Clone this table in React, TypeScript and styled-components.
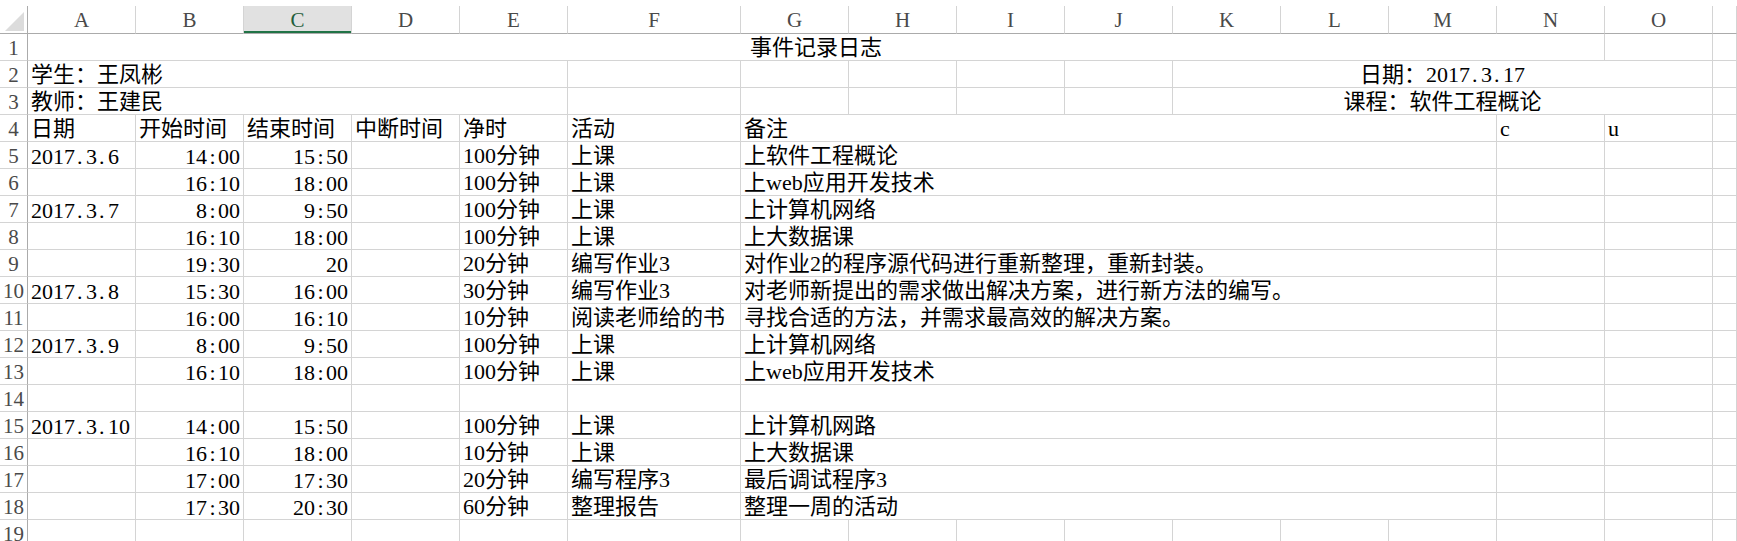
import React from "react";
import styled, { createGlobalStyle } from "styled-components";

const GRID = "#d4d4d4";
const HEAD_LINE = "#ababab";
const FONT = `"Liberation Serif", "Noto Sans CJK SC", serif`;

const GlobalStyle = createGlobalStyle`
  html, body {
    margin: 0;
    padding: 0;
    background: #ffffff;
    overflow: hidden;
  }
  body {
    font-family: ${FONT};
  }
`;

const Sheet = styled.div`
  display: grid;
  grid-template-columns: 28px repeat(5, 108px) 173px repeat(9, 108px) minmax(0, 1fr);
  grid-template-rows: 34px;
  grid-auto-rows: 27px;
  width: 1737px;
  height: 541px;
  overflow: hidden;
  color: #000000;
  font-family: ${FONT};
  font-size: 22px;
`;

const Corner = styled.div`
  margin-top: 6px;
  border-right: 1px solid ${HEAD_LINE};
  border-bottom: 1px solid ${HEAD_LINE};
  display: flex;
  justify-content: flex-end;
  align-items: flex-end;
  padding: 0 3px 2px 0;
`;

const CornerMark = styled.span`
  width: 19px;
  height: 19px;
  background: #dcdcdc;
  clip-path: polygon(100% 0, 100% 100%, 0 100%);
`;

const ColHead = styled.div<{ $selected?: boolean }>`
  margin-top: 6px;
  border-right: 1px solid ${GRID};
  border-bottom: 1px solid ${HEAD_LINE};
  display: flex;
  justify-content: center;
  align-items: flex-end;
  padding-bottom: 2px;
  font-size: 21px;
  line-height: 22px;
  color: ${(p) => (p.$selected ? "#1f5e3b" : "#4a4a4a")};
  background: ${(p) => (p.$selected ? "#e1e1e1" : "#ffffff")};
  box-shadow: ${(p) => (p.$selected ? "inset 0 -2px 0 #217346" : "none")};
`;

const RowHead = styled.div`
  border-right: 1px solid ${HEAD_LINE};
  border-bottom: 1px solid ${GRID};
  display: flex;
  justify-content: center;
  align-items: flex-end;
  padding-bottom: 1px;
  font-size: 21px;
  line-height: 22px;
  color: #4a4a4a;
  white-space: nowrap;
`;

type Align = "left" | "right" | "center";

const Cell = styled.div<{ $span?: number; $align?: Align }>`
  grid-column: span ${(p) => p.$span ?? 1};
  border-right: 1px solid ${GRID};
  border-bottom: 1px solid ${GRID};
  display: flex;
  align-items: flex-end;
  justify-content: ${(p) =>
    p.$align === "right" ? "flex-end" : p.$align === "center" ? "center" : "flex-start"};
  padding: 0 3px 1px 3px;
  line-height: 22px;
  white-space: nowrap;
  min-width: 0;
`;

/* numbers sit on a slightly lower baseline than the ideographs */
const NumText = styled.span`
  margin-bottom: -1px;
`;

/* half-width punctuation, as in the sheet's monospaced Latin glyphs */
const Punct = styled.span<{ $dot?: boolean }>`
  display: inline-block;
  width: 11px;
  text-align: ${(p) => (p.$dot ? "left" : "center")};
  padding-left: ${(p) => (p.$dot ? "2px" : "0")};
  box-sizing: border-box;
`;

function Num({ value }: { value?: string }) {
  if (!value) return null;
  const parts = value.split(/([.:])/);
  return (
    <NumText>
      {parts.map((part, i) =>
        part === "." || part === ":" ? (
          <Punct key={i} $dot={part === "."}>
            {part}
          </Punct>
        ) : (
          <React.Fragment key={i}>{part}</React.Fragment>
        )
      )}
    </NumText>
  );
}

const COLS = ["A", "B", "C", "D", "E", "F", "G", "H", "I", "J", "K", "L", "M", "N", "O", ""];

type Entry = {
  date?: string;
  start?: string;
  end?: string;
  net?: string;
  act?: string;
  note?: string;
};

const entries: Entry[] = [
  { date: "2017.3.6", start: "14:00", end: "15:50", net: "100分钟", act: "上课", note: "上软件工程概论" },
  { start: "16:10", end: "18:00", net: "100分钟", act: "上课", note: "上web应用开发技术" },
  { date: "2017.3.7", start: "8:00", end: "9:50", net: "100分钟", act: "上课", note: "上计算机网络" },
  { start: "16:10", end: "18:00", net: "100分钟", act: "上课", note: "上大数据课" },
  { start: "19:30", end: "20", net: "20分钟", act: "编写作业3", note: "对作业2的程序源代码进行重新整理，重新封装。" },
  { date: "2017.3.8", start: "15:30", end: "16:00", net: "30分钟", act: "编写作业3", note: "对老师新提出的需求做出解决方案，进行新方法的编写。" },
  { start: "16:00", end: "16:10", net: "10分钟", act: "阅读老师给的书", note: "寻找合适的方法，并需求最高效的解决方案。" },
  { date: "2017.3.9", start: "8:00", end: "9:50", net: "100分钟", act: "上课", note: "上计算机网络" },
  { start: "16:10", end: "18:00", net: "100分钟", act: "上课", note: "上web应用开发技术" },
  {},
  { date: "2017.3.10", start: "14:00", end: "15:50", net: "100分钟", act: "上课", note: "上计算机网路" },
  { start: "16:10", end: "18:00", net: "10分钟", act: "上课", note: "上大数据课" },
  { start: "17:00", end: "17:30", net: "20分钟", act: "编写程序3", note: "最后调试程序3" },
  { start: "17:30", end: "20:30", net: "60分钟", act: "整理报告", note: "整理一周的活动" },
];

function EntryRow({ n, e }: { n: number; e: Entry }) {
  return (
    <>
      <RowHead>{n}</RowHead>
      <Cell>
        <Num value={e.date} />
      </Cell>
      <Cell $align="right">
        <Num value={e.start} />
      </Cell>
      <Cell $align="right">
        <Num value={e.end} />
      </Cell>
      <Cell />
      <Cell>{e.net}</Cell>
      <Cell>{e.act}</Cell>
      <Cell $span={7}>{e.note}</Cell>
      <Cell />
      <Cell />
      <Cell />
    </>
  );
}

export default function App() {
  return (
    <>
      <GlobalStyle />
      <Sheet>
        <Corner>
          <CornerMark />
        </Corner>
        {COLS.map((c, i) => (
          <ColHead key={i} $selected={c === "C"}>
            {c}
          </ColHead>
        ))}

        <RowHead>1</RowHead>
        <Cell $span={14} $align="center">事件记录日志</Cell>
        <Cell />
        <Cell />

        <RowHead>2</RowHead>
        <Cell $span={5}>学生：王凤彬</Cell>
        <Cell />
        <Cell />
        <Cell />
        <Cell />
        <Cell />
        <Cell $span={5} $align="center">
          <span>
            日期：<Num value="2017.3.17" />
          </span>
        </Cell>
        <Cell />

        <RowHead>3</RowHead>
        <Cell $span={5}>教师：王建民</Cell>
        <Cell />
        <Cell />
        <Cell />
        <Cell />
        <Cell />
        <Cell $span={5} $align="center">课程：软件工程概论</Cell>
        <Cell />

        <RowHead>4</RowHead>
        <Cell>日期</Cell>
        <Cell>开始时间</Cell>
        <Cell>结束时间</Cell>
        <Cell>中断时间</Cell>
        <Cell>净时</Cell>
        <Cell>活动</Cell>
        <Cell $span={7}>备注</Cell>
        <Cell>c</Cell>
        <Cell>u</Cell>
        <Cell />

        {entries.map((e, i) => (
          <EntryRow key={i} n={i + 5} e={e} />
        ))}

        <RowHead>19</RowHead>
        {COLS.map((_, i) => (
          <Cell key={i} />
        ))}
      </Sheet>
    </>
  );
}
